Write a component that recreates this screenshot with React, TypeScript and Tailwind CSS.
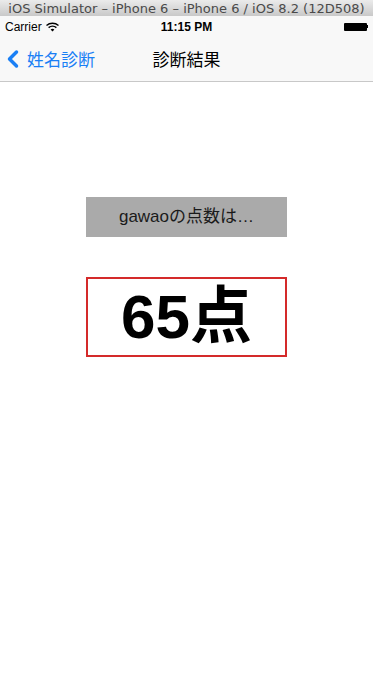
import { ChevronLeft } from 'lucide-react';

const jp = { fontFamily: '"Noto Sans CJK JP", "Liberation Sans", sans-serif' };

function Wifi() {
  return (
    <svg width="13" height="10" viewBox="0 0 13 10" className="ml-1">
      <path d="M0.5 3.5 A9 9 0 0 1 12.5 3.5" fill="none" stroke="#000" strokeWidth="1.4" />
      <path d="M2.6 5.6 A6 6 0 0 1 10.4 5.6" fill="none" stroke="#000" strokeWidth="1.4" />
      <path d="M6.5 9.5 L4.6 7.6 A2.8 2.8 0 0 1 8.4 7.6 Z" fill="#000" />
    </svg>
  );
}

export default function App() {
  return (
    <div className="flex h-[681px] w-[373px] flex-col bg-white" style={jp}>
      <div className="flex h-[16px] items-center justify-center bg-gradient-to-b from-[#ebebeb] to-[#c9c9c9] text-[13px] leading-none text-[#4a4a4a]"
        style={{ fontFamily: '"DejaVu Sans", sans-serif' }}>
        iOS Simulator – iPhone 6 – iPhone 6 / iOS 8.2 (12D508)
      </div>
      <div className="flex flex-col border-b border-[#c8c8c8] bg-[#f8f8f8]">
        <div className="relative flex h-[21px] items-center px-[5px] text-[12px]" style={{ fontFamily: '"Liberation Sans", sans-serif' }}>
          <span>Carrier</span>
          <Wifi />
          <span className="absolute left-1/2 -translate-x-1/2 font-bold">11:15 PM</span>
          <div className="ml-auto flex items-center">
            <div className="h-[8px] w-[23px] rounded-[1px] bg-black" />
            <div className="h-[3px] w-[1.5px] bg-black" />
          </div>
        </div>
        <div className="relative flex h-[44px] items-center">
          <div className="flex items-center text-[#1a7ff5]">
            <ChevronLeft size={28} strokeWidth={3} className="-ml-[1px]" />
            <span className="text-[17px]">姓名診断</span>
          </div>
          <span className="absolute left-1/2 -translate-x-1/2 text-[17px] text-black">診断結果</span>
        </div>
      </div>
      <div className="flex flex-col items-center pt-[115px]">
        <div className="flex h-[40px] w-[201px] items-center justify-center bg-[#aaaaaa] text-[17px] text-[#1a1a1a]"
          style={{ fontFamily: '"Liberation Sans", "Noto Sans CJK JP", sans-serif' }}>
          gawaoの点数は…
        </div>
        <div className="mt-[40px] flex h-[80px] w-[201px] items-center justify-center border-2 border-[#d42a2a]">
          <span className="text-[62px] font-bold leading-none text-black" style={{ fontFamily: '"Liberation Sans", "Noto Sans CJK JP", sans-serif' }}>
            65点
          </span>
        </div>
      </div>
    </div>
  );
}
